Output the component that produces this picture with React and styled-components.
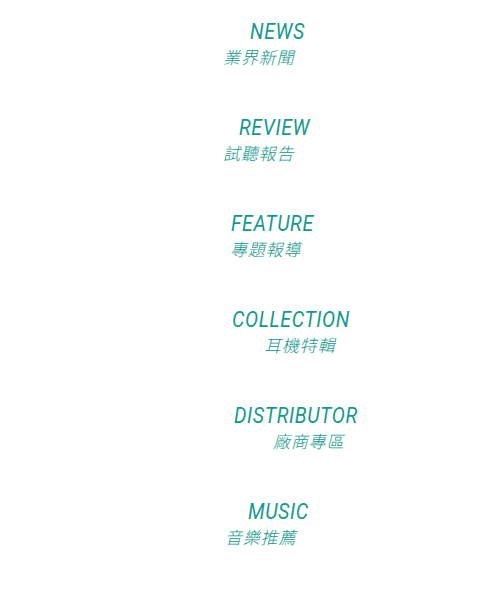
import React from 'react';
import styled, { createGlobalStyle } from 'styled-components';

const GlobalStyle = createGlobalStyle`
    html, body {
        margin: 0;
        padding: 0;
        background: #ffffff;
    }
`

// each entry sits a little off from the others in the design, so the
// title / subtitle offsets are kept per item
const menu = [
    { en: 'NEWS', zh: '業界新聞', titleX: 250, subX: 223 },
    { en: 'REVIEW', zh: '試聽報告', titleX: 239, subX: 223 },
    { en: 'FEATURE', zh: '專題報導', titleX: 231, subX: 230 },
    { en: 'COLLECTION', zh: '耳機特輯', titleX: 232, subX: 264 },
    { en: 'DISTRIBUTOR', zh: '廠商專區', titleX: 234, subX: 273 },
    { en: 'MUSIC', zh: '音樂推薦', titleX: 248, subX: 225 },
];

const App = () => {
    return(<Page>
        <GlobalStyle/>
        <MenuList>
            {
                menu.map(item => {
                    return <MenuItem key={item.en}>
                        <Title $offset={item.titleX}>{item.en}</Title>
                        <Subtitle $offset={item.subX}>{item.zh}</Subtitle>
                    </MenuItem>
                })
            }
        </MenuList>
    </Page>);
}

export default App;

const Page = styled.div`
    width: 500px;
    height: 600px;
    background: #ffffff;
`

const MenuList = styled.ul`
    list-style: none;
    margin: 0;
    padding: 16px 0 0;
    display: flex;
    flex-direction: column;
    gap: 44px;
`

const MenuItem = styled.li`
    display: flex;
    flex-direction: column;
    align-items: flex-start;
    color: #149a8c;
`

const Title = styled.span`
    display: inline-block;
    margin-left: ${props => props.$offset}px;
    font-family: Roboto, "Liberation Sans", sans-serif;
    font-style: italic;
    font-weight: 400;
    font-size: 22.5px;
    line-height: 30px;
    letter-spacing: 0.7px;
    transform: scaleX(0.87);
    transform-origin: left center;
    white-space: nowrap;
`

const Subtitle = styled.span`
    display: inline-block;
    margin-left: ${props => props.$offset}px;
    font-family: "Noto Sans CJK TC", "Noto Sans", sans-serif;
    font-style: italic;
    font-weight: 300;
    font-size: 17px;
    line-height: 22px;
    letter-spacing: 0.8px;
    white-space: nowrap;
`
